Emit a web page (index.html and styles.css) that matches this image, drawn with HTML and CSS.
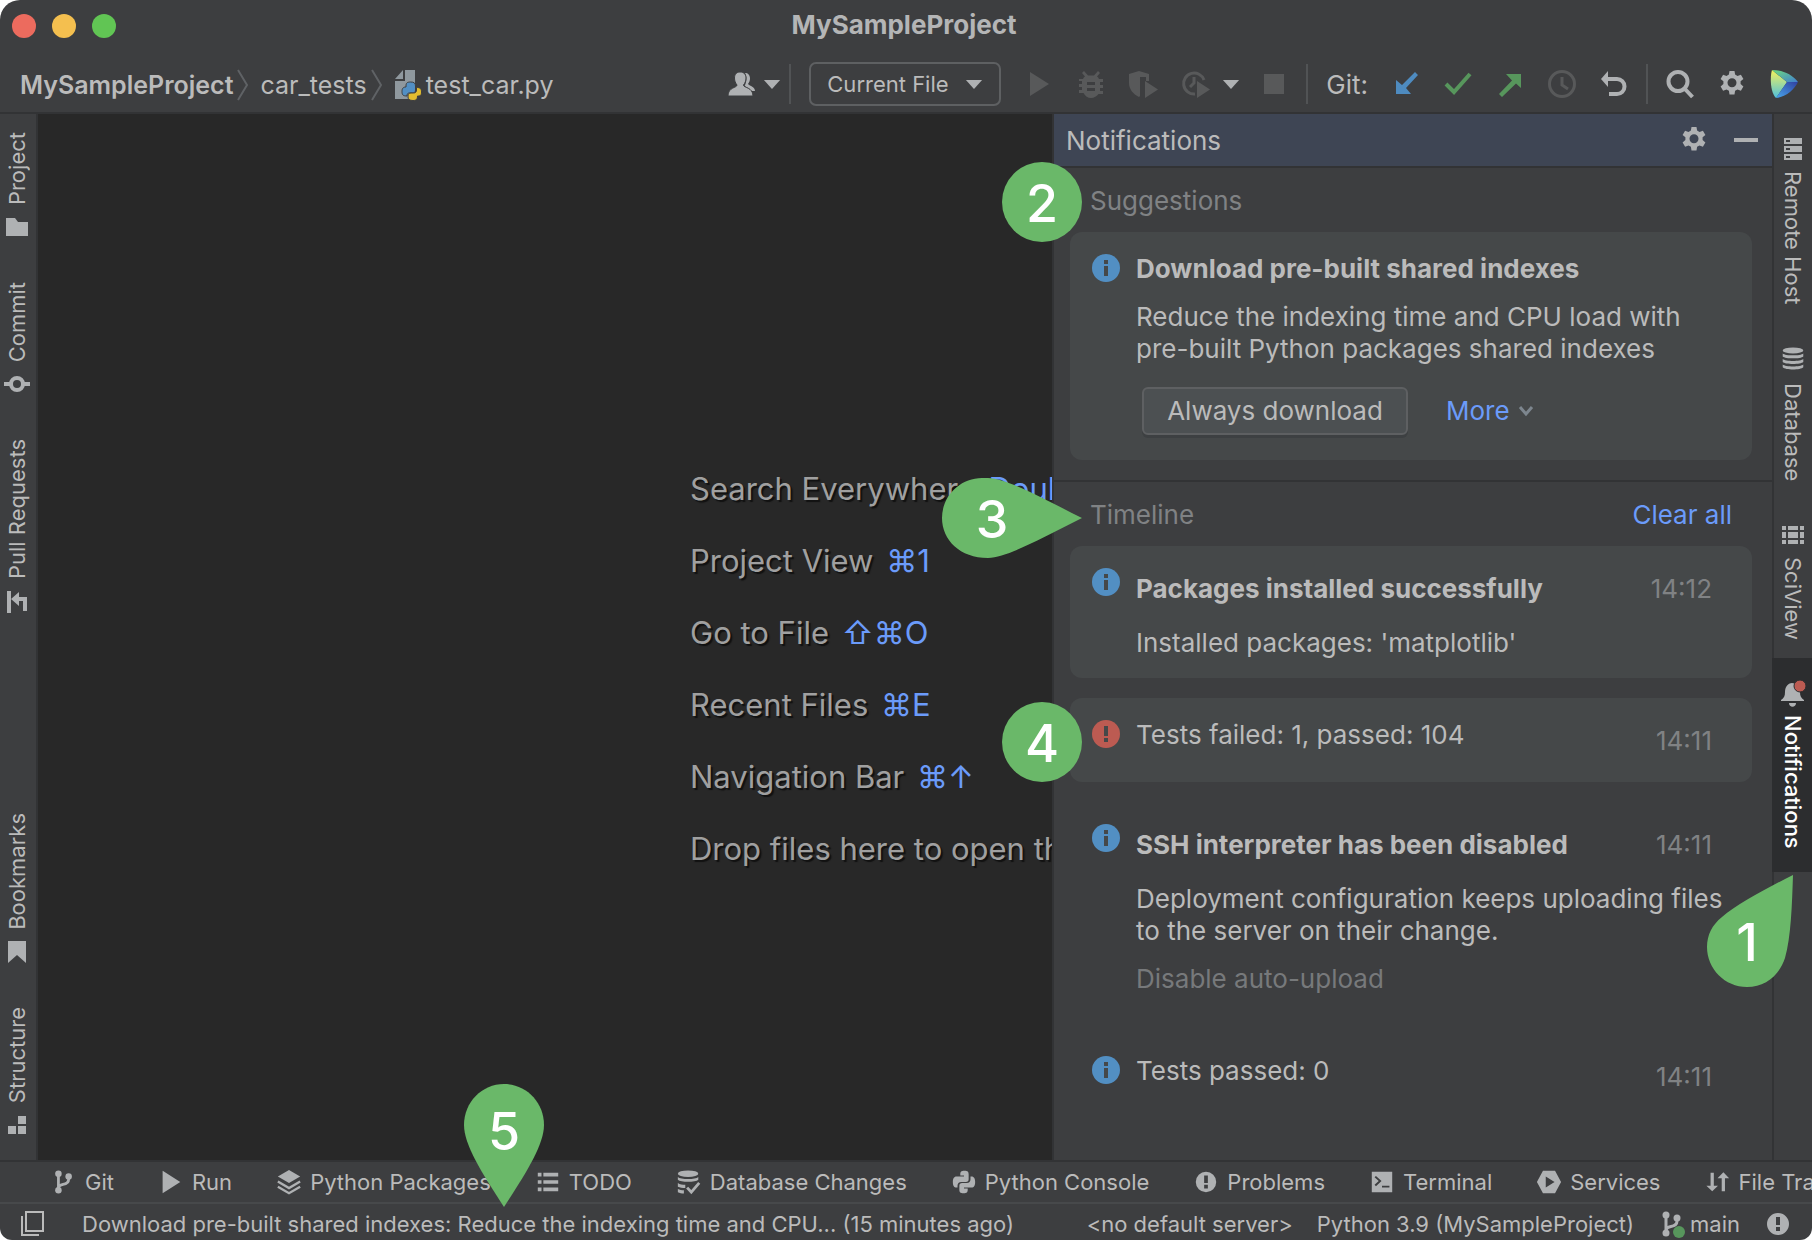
FILE: index.html
```html
<!DOCTYPE html>
<html lang="en">
<head>
    <meta charset="UTF-8">
    <title>MySampleProject</title>
    <link rel="stylesheet" href="styles.css">
</head>
<body>
    <!-- icon sprite -->
    <svg class="sprite" aria-hidden="true">
        <symbol id="i-gear" viewBox="0 0 28 28"><path fill-rule="evenodd" d="M11.5 1h5l.6 3.6 2.4 1.4 3.4-1.3 2.5 4.3-2.8 2.3v2.8l2.8 2.3-2.5 4.3-3.4-1.3-2.4 1.4-.6 3.6h-5l-.6-3.6-2.4-1.4-3.4 1.3-2.5-4.3 2.8-2.3V11.300L2.600 9l2.500-4.300L8.500 6l2.400-1.400zM14 8.200a4.500 4.500 0 1 0 0 9.000a4.500 4.500 0 0 0 0-9z"/></symbol>
        <symbol id="i-info" viewBox="0 0 28 28"><circle cx="14" cy="14" r="14" fill="#528fc3"/><path fill="#454849" d="M12 6h4v4h-4zM12 12h4v10h-4z"/></symbol>
        <symbol id="i-error" viewBox="0 0 28 28"><circle cx="14" cy="14" r="14" fill="#bc5b52"/><path fill="#454849" d="M12 6h4v10h-4zM12 18h4v4h-4z"/></symbol>
        <symbol id="i-warn" viewBox="0 0 28 28"><path fill-rule="evenodd" d="M14 3a11 11 0 1 0 0 22a11 11 0 0 0 0-22zM12 7h4v8h-4zM12 17h4v4h-4z"/></symbol>
        <symbol id="i-branch" viewBox="0 0 28 28"><circle cx="8" cy="5" r="3.500"/><circle cx="8" cy="23" r="3.500"/><circle cx="19" cy="8" r="3.500"/><path fill="none" stroke="currentColor" stroke-width="3" d="M8 5v18M19 8v3c0 4-3 5-6 5.500S8 18 8 21"/></symbol>
        <symbol id="i-play" viewBox="0 0 28 28"><path d="M5 2l19 12L5 26z"/></symbol>
        <symbol id="i-tri" viewBox="0 0 20 12"><path d="M1 1h18l-9 10z"/></symbol>
        <symbol id="i-crumb" viewBox="0 0 12 32"><path fill="none" stroke="#5f6265" stroke-width="2" d="M1 1l9 15-9 15"/></symbol>
        <symbol id="i-db" viewBox="0 0 28 28"><ellipse cx="14" cy="4" rx="12" ry="3.500"/><path d="M2 7.500c3 3 21 3 24 0v3.500c-3 3-21 3-24 0zM2 14c3 3 21 3 24 0v3.500c-3 3-21 3-24 0zM2 20.500c3 3 21 3 24 0v3c-3 3.500-21 3.500-24 0z"/></symbol>
        <symbol id="i-dbcheck" viewBox="0 0 28 28"><ellipse cx="13" cy="5" rx="11" ry="3.500"/><path d="M2 8.500c3 3 19 3 22 0v3c-3 3-19 3-22 0zM2 15c2 1.500 5 2 8 2v3.500c-3 0-6-.5-8-1.500zM2 21.500c2 1 4 1.500 6.500 1.500v3.500C6 26.500 4 26 2 25z"/><path fill="none" stroke="currentColor" stroke-width="3" d="M12 20l4.500 5L25 15"/></symbol>
        <symbol id="i-layers" viewBox="0 0 28 28"><path d="M14 1l12 7-12 7L2 8z"/><path fill="none" stroke="currentColor" stroke-width="2.500" d="M2 13.500l12 7 12-7M2 19l12 7 12-7"/></symbol>
        <symbol id="i-list" viewBox="0 0 28 28"><path d="M3 4h4v4H3zM9 4h16v4H9zM3 12h4v4H3zM9 12h16v4H9zM3 20h4v4H3zM9 20h16v4H9z"/></symbol>
        <symbol id="i-python" viewBox="0 0 28 28"><path d="M10 6c0-3 1-4 4.500-4S19 3 19 6v5c0 2-1 3-3 3h-5c-2.500 0-4 1.500-4 4v2H6c-3 0-4-2.500-4-6s1-6 4-6h8V7h-4z"/><path d="M18 22c0 3-1 4-4.500 4S9 25 9 22v-4c0-2 1-3 3-3h5c2.500 0 4-1.500 4-4V8h1c3 0 4 2.500 4 6s-1 6-4 6h-8v1h4z"/></symbol>
        <symbol id="i-terminal" viewBox="0 0 28 28"><path fill-rule="evenodd" d="M3 3h22v22H3zM6 9l4.500 4L6 17l1.500 1.500 6-5.500-6-5.500zM14 18v2h8v-2z"/></symbol>
        <symbol id="i-services" viewBox="0 0 28 28"><path fill-rule="evenodd" d="M7.500 2h13L27 14l-6.500 12h-13L1 14zM10.500 8v12l9.500-6z"/></symbol>
        <symbol id="i-updown" viewBox="0 0 28 28"><path d="M6 4h3.500v14H14l-6.200 6L1.500 18H6zM18 24h3.500V10H26l-6.200-6.500L13.500 10H18z"/></symbol>
        <symbol id="i-py-file" viewBox="0 0 28 32"><path fill="#8f989e" d="M9 1v9H1zM11 1h10v29H1V12h10z"/><path stroke="#3d3e40" stroke-width="1" fill="#528fc3" d="M12 17c0-3 1-4 4.500-4s5 1 5 4v4c0 2-1 3-3 3h-3c-2 0-2.500 1-2.500 3-4 0-5-1-5-4.500S9.500 18 12 18z"/><path stroke="#3d3e40" stroke-width="1" fill="#e3bd2f" d="M23.500 27c0 3-1 4.500-4.500 4.500s-5-1.500-5-3.500v-1c0-2 1-3 3-3h2.500c2 0 3-1 3-3v-2.500c3.500 0 5 1 5 4.500s-1 4-4 4z"/></symbol>
    </svg>

    <div class="window">
        <header class="titlebar">
            <div class="lights">
                <span class="light red"></span>
                <span class="light yellow"></span>
                <span class="light green"></span>
            </div>
            <h1>MySampleProject</h1>
        </header>

        <div class="toolbar">
            <nav class="crumbs">
                <a href="#" class="crumb-root">MySampleProject</a>
                <svg class="crumb-sep"><use href="#i-crumb"/></svg>
                <a href="#">car_tests</a>
                <svg class="crumb-sep"><use href="#i-crumb"/></svg>
                <svg class="py-file"><use href="#i-py-file"/></svg>
                <a href="#">test_car.py</a>
            </nav>
            <div class="tools">
                <button class="tool user" aria-label="Code with me">
                    <svg class="icon" viewBox="0 0 28 28"><path d="M17 3c3 0 5 2 5 5.500 0 2-.8 4-2 5.500 2 2 7 3 7 7h-5c-1-3-4-4-5.500-5C19 12 19 6 17 3z"/><path stroke="#3d3e40" stroke-width="1" d="M12 2c4 0 6 2.500 6 6 0 3-1 5-2.500 7 0 3 9.500 2 9.500 11H0c0-9 9-8 9-11C7.500 13 6.500 11 6.500 8c0-3.500 2-6 5.500-6z"/></svg>
                    <svg class="tri"><use href="#i-tri"/></svg>
                </button>
                <span class="divider"></span>
                <label class="combo">
                    <select aria-label="Run configuration"><option>Current File</option></select>
                    <svg class="tri"><use href="#i-tri"/></svg>
                </label>
                <button class="tool off" aria-label="Run"><svg class="icon"><use href="#i-play"/></svg></button>
                <button class="tool off" aria-label="Debug">
                    <svg class="icon" viewBox="0 0 28 28"><path fill-rule="evenodd" d="M7 1l4 4.500h6L21 1l2 2-3 3.500c1 .5 1.500 1.500 2 2.500h4v3h-3v3h3v3h-3v3h3v3h-4.500C20 26 17 28 14 28s-6-2-7.500-5H2v-3h3v-3H2v-3h3v-3H2V9h4c.500-1 1-2 2-2.500L5 3zM10 12v3h8v-3zM10 18v3h8v-3z"/></svg>
                </button>
                <button class="tool off" aria-label="Run with coverage">
                    <svg class="icon" viewBox="0 0 28 28"><path d="M0 4l10-3 10 3v7h-3V7h-6v19l-1 1C4 24 0 19 0 13z"/><path d="M16 11l13 8.500L16 28z"/></svg>
                </button>
                <button class="tool off profile" aria-label="Profile">
                    <svg class="icon" viewBox="0 0 28 28"><path fill="none" stroke="currentColor" stroke-width="3" d="M23 10A10.500 10.500 0 1 0 14 24M13 7v6l-4 4"/><path d="M16 11l13 8.500L16 28z"/></svg>
                    <svg class="tri"><use href="#i-tri"/></svg>
                </button>
                <button class="tool off" aria-label="Stop"><svg class="icon" viewBox="0 0 28 28"><path d="M4 4h20v20H4z"/></svg></button>
                <span class="divider"></span>
                <span class="git-label">Git:</span>
                <button class="tool blue" aria-label="Update project"><svg class="icon" viewBox="0 0 28 28"><path d="M23 2l3 3L14 18l5 6H4V10l6 5z"/></svg></button>
                <button class="tool leaf" aria-label="Commit"><svg class="icon" viewBox="0 0 28 28"><path fill="none" stroke="currentColor" stroke-width="4" d="M2 14l8 8L26 4"/></svg></button>
                <button class="tool leaf" aria-label="Push"><svg class="icon" viewBox="0 0 28 28"><path d="M10 4h15v14l-5-4.500L6 27l-3-3 13-13.500z"/></svg></button>
                <button class="tool off" aria-label="History"><svg class="icon" viewBox="0 0 28 28"><path fill="none" stroke="currentColor" stroke-width="3" d="M14 1.500a12.500 12.500 0 1 0 0 25a12.500 12.500 0 0 0 0-25zM14 7v8l6 4"/></svg></button>
                <button class="tool" aria-label="Rollback"><svg class="icon" viewBox="0 0 28 28"><path d="M8 1v6h9a9.500 9.500 0 0 1 0 19H9v-4h8a5.500 5.500 0 0 0 0-11H8v6L1 9z"/></svg></button>
                <span class="divider"></span>
                <button class="tool" aria-label="Search"><svg class="icon" viewBox="0 0 28 28"><path fill="none" stroke="currentColor" stroke-width="4" d="M12 2a9.500 9.500 0 1 0 0 19a9.500 9.500 0 0 0 0-19zM18 18l8.500 9"/></svg></button>
                <button class="tool" aria-label="Settings"><svg class="icon"><use href="#i-gear"/></svg></button>
                <button class="tool" aria-label="Toolbox">
                    <svg class="icon" viewBox="0 0 28 28">
                        <defs>
                            <linearGradient id="g1" x1="0" y1="0" x2="0" y2="1"><stop offset="0" stop-color="#f4f35c"/><stop offset="1" stop-color="#4fc0dc"/></linearGradient>
                            <linearGradient id="g2" x1="0" y1="0" x2="1" y2="1"><stop offset="0" stop-color="#6fdc7c"/><stop offset="1" stop-color="#3f7fd0"/></linearGradient>
                            <linearGradient id="g3" x1="0" y1="1" x2="1" y2="0"><stop offset="0" stop-color="#49a6ec"/><stop offset="1" stop-color="#2f3fa0"/></linearGradient>
                        </defs>
                        <path fill="url(#g1)" d="M2 0c-2 6-2 22 4 28l11-16z"/>
                        <path fill="url(#g2)" d="M2 0c10 0 20 4 26 12H17z"/>
                        <path fill="url(#g3)" d="M17 12h11c-4 8-12 15-22 16z"/>
                    </svg>
                </button>
            </div>
        </div>

        <div class="workspace">
            <aside class="stripe stripe-left">
                <div class="stripe-group">
                    <button class="stripe-btn"><span>Project</span><svg viewBox="0 0 22 22"><path d="M0 2h9l3 4h10v14H0z"/></svg></button>
                    <button class="stripe-btn"><span>Commit</span><svg class="wide" viewBox="0 0 26 22"><path fill="none" stroke="currentColor" stroke-width="4" d="M13 5a6 6 0 1 0 0 12a6 6 0 0 0 0-12zM0 11h7M19 11h7"/></svg></button>
                    <button class="stripe-btn"><span>Pull Requests</span><svg viewBox="0 0 22 22"><path d="M1 0h4v22H1zM5 8l8-7v5h8v14h-4V10h-4v5z"/></svg></button>
                </div>
                <div class="stripe-group">
                    <button class="stripe-btn"><span>Bookmarks</span><svg viewBox="0 0 22 22"><path d="M2 0h18v22l-9-8-9 8z"/></svg></button>
                    <button class="stripe-btn"><span>Structure</span><svg viewBox="0 0 22 22"><path d="M12 2h8v8h-8zM2 12h8v8H2zM12 12h8v8h-8z"/></svg></button>
                </div>
            </aside>

            <main class="editor">
                <ul class="hints">
                    <li>Search Everywhere <kbd>Double ⇧</kbd></li>
                    <li>Project View <kbd>⌘1</kbd></li>
                    <li>Go to File <kbd>⇧⌘O</kbd></li>
                    <li>Recent Files <kbd>⌘E</kbd></li>
                    <li>Navigation Bar <kbd>⌘↑</kbd></li>
                    <li>Drop files here to open them</li>
                </ul>
            </main>

            <section class="panel">
                <div class="panel-header">
                    <h2>Notifications</h2>
                    <button class="tool" aria-label="Options"><svg class="icon"><use href="#i-gear"/></svg></button>
                    <button class="tool" aria-label="Hide"><svg class="icon" viewBox="0 0 28 28"><path d="M2 12h24v4H2z"/></svg></button>
                </div>

                <div class="suggestions">
                    <div class="section-head">
                        <h3>Suggestions</h3>
                        <div class="pin pin-round pin-2">2</div>
                    </div>
                    <article class="card">
                        <svg class="status"><use href="#i-info"/></svg>
                        <div class="card-body">
                            <h4>Download pre-built shared indexes</h4>
                            <p>Reduce the indexing time and CPU load with<br>pre-built Python packages shared indexes</p>
                            <div class="actions">
                                <button class="btn">Always download</button>
                                <button class="link-btn">More <svg viewBox="0 0 16 12"><path fill="none" stroke="#7d868e" stroke-width="3" d="M2 2l6 7 6-7"/></svg></button>
                            </div>
                        </div>
                    </article>
                </div>

                <div class="timeline">
                    <div class="section-head">
                        <h3>Timeline</h3>
                        <a href="#" class="clear">Clear all</a>
                        <div class="pin pin-3">
                            <svg viewBox="0 0 140 80"><path d="M40 0C18 0 0 18 0 40s18 40 46 40C66 79 96 62 140 40 96 18 66 1 46 0z"/></svg>
                            <span>3</span>
                        </div>
                    </div>
                    <article class="card timed">
                        <svg class="status"><use href="#i-info"/></svg>
                        <div class="card-body">
                            <h4>Packages installed successfully</h4>
                            <p>Installed packages: 'matplotlib'</p>
                        </div>
                        <time>14:12</time>
                    </article>
                    <article class="card short">
                        <svg class="status"><use href="#i-error"/></svg>
                        <div class="card-body"><p>Tests failed: 1, passed: 104</p></div>
                        <time>14:11</time>
                        <div class="pin pin-round pin-4">4</div>
                    </article>
                    <article class="card timed read">
                        <svg class="status"><use href="#i-info"/></svg>
                        <div class="card-body">
                            <h4>SSH interpreter has been disabled</h4>
                            <p>Deployment configuration keeps uploading files<br>to the server on their change.</p>
                            <button class="dim-btn" disabled>Disable auto-upload</button>
                        </div>
                        <time>14:11</time>
                    </article>
                    <article class="card short read">
                        <svg class="status"><use href="#i-info"/></svg>
                        <div class="card-body"><p>Tests passed: 0</p></div>
                        <time>14:11</time>
                    </article>
                </div>
            </section>

            <aside class="stripe stripe-right">
                <button class="stripe-btn"><svg viewBox="0 0 22 22"><path fill-rule="evenodd" d="M2 0h18v6H2zM4 2v2h4V2zM2 8h18v6H2zM4 10v2h4v-2zM2 16h18v6H2zM4 18v2h4v-2z"/></svg><span>Remote Host</span></button>
                <button class="stripe-btn"><svg class="tall"><use href="#i-db"/></svg><span>Database</span></button>
                <button class="stripe-btn"><svg viewBox="0 0 22 22"><path d="M0 2h4v4H0zM6 2h10v4H6zM18 2h4v4h-4zM0 8h4v6H0zM6 8h10v6H6zM18 8h4v6h-4zM0 16h4v4H0zM6 16h10v4H6zM18 16h4v4h-4z"/></svg><span>SciView</span></button>
                <button class="stripe-btn active"><svg class="tall" viewBox="0 0 24 26"><path d="M11 2c3 0 8 3 8 9 0 4 1 6 4 8v1H0v-1c3-2 4-4 4-8 0-6 4-9 7-9zM8 22h7c0 5-7 5-7 0z"/><circle cx="19" cy="5" r="6" fill="#bc5b52" stroke="#2c2d2f"/></svg><span>Notifications</span></button>
                <div class="pin pin-1">
                    <svg viewBox="0 0 86 112"><path d="M86 0C60 13 30 29 15 42 5 50 0 60 0 72c0 22 18 40 40 40 18 0 32-11 38-29C84 62 85 30 86 0z"/></svg>
                    <span>1</span>
                </div>
            </aside>
        </div>

        <div class="toolwindows">
            <button class="tw"><svg><use href="#i-branch"/></svg>Git</button>
            <button class="tw"><svg><use href="#i-play"/></svg>Run</button>
            <button class="tw"><svg><use href="#i-layers"/></svg>Python Packages</button>
            <button class="tw"><svg><use href="#i-list"/></svg>TODO</button>
            <button class="tw"><svg><use href="#i-dbcheck"/></svg>Database Changes</button>
            <button class="tw"><svg><use href="#i-python"/></svg>Python Console</button>
            <button class="tw"><svg><use href="#i-warn"/></svg>Problems</button>
            <button class="tw"><svg><use href="#i-terminal"/></svg>Terminal</button>
            <button class="tw"><svg><use href="#i-services"/></svg>Services</button>
            <button class="tw"><svg><use href="#i-updown"/></svg>File Transfer</button>
        </div>

        <footer class="statusbar">
            <svg class="windows" viewBox="0 0 26 26"><path fill="none" stroke="currentColor" stroke-width="2" d="M6 1h17v19H6zM2 5v19h17"/></svg>
            <span class="message">Download pre-built shared indexes: Reduce the indexing time and CPU... (15 minutes ago)</span>
            <span>&lt;no default server&gt;</span>
            <span>Python 3.9 (MySampleProject)</span>
            <span class="branch"><svg viewBox="0 0 28 28"><use href="#i-branch"/><circle cx="21" cy="22" r="6" fill="#57965c"/></svg>main</span>
            <svg class="event"><use href="#i-warn"/></svg>
            <div class="pin pin-5">
                <svg viewBox="0 0 80 123"><path d="M40 0C18 0 0 18 0 41c0 20 18 48 40 82 22-34 40-62 40-82C80 18 62 0 40 0z"/></svg>
                <span>5</span>
            </div>
        </footer>
    </div>
</body>
</html>
```
FILE: styles.css
```css
* {
    box-sizing: border-box;
}

body {
    margin: 0;
    background: #fff;
    color: #bbbbbb;
    font-family: Inter, "Liberation Sans", sans-serif;
    font-size: 26px;
}

h1, h2, h3, h4, p, ul {
    margin: 0;
    padding: 0;
}

a {
    color: inherit;
    text-decoration: none;
}

button, select {
    font: inherit;
    color: inherit;
    background: none;
    border: none;
    padding: 0;
    margin: 0;
}

svg {
    fill: currentColor;
    flex: none;
    display: block;
    overflow: visible;
}

.sprite {
    position: absolute;
    width: 0;
    height: 0;
}

.window {
    display: flex;
    flex-direction: column;
    min-height: 100vh;
    background: #3d3e40;
    border-radius: 20px 20px 12px 12px;
    overflow: hidden;
}

/* title bar */

.titlebar {
    position: relative;
    display: flex;
    align-items: center;
    justify-content: center;
    height: 52px;
    padding: 0 4px 4px 0;
}

.titlebar h1 {
    font-size: 26px;
    font-weight: 700;
    color: #b4b5b6;
}

.lights {
    position: absolute;
    left: 12px;
    top: 14px;
    display: flex;
    gap: 16px;
}

.light {
    width: 24px;
    height: 24px;
    border-radius: 50%;
}

.red { background: #ec6b5e; }
.yellow { background: #f4bf4f; }
.green { background: #61c554; }

/* toolbar */

.toolbar {
    display: flex;
    align-items: center;
    justify-content: space-between;
    height: 62px;
    padding: 4px 14px 0 20px;
    border-bottom: 2px solid #323335;
}

.crumbs {
    display: flex;
    align-items: center;
    font-size: 25px;
    padding-top: 2px;
}

.crumb-root {
    font-weight: 600;
}

.crumb-sep {
    width: 12px;
    height: 32px;
    margin: 0 11px 0 4px;
}

.py-file {
    width: 28px;
    height: 32px;
    margin-right: 4px;
}

.tools {
    display: flex;
    align-items: center;
    gap: 24px;
}

.tool {
    display: flex;
    align-items: center;
    color: #afb1b3;
}

.icon {
    width: 28px;
    height: 28px;
}

.tri {
    width: 18px;
    height: 11px;
    color: #afb1b3;
}

.user {
    gap: 7px;
    margin-right: -10px;
}

.profile {
    gap: 13px;
    margin-right: -4px;
}

.off { color: #58595a; }
.blue { color: #4e8bc0; }
.leaf { color: #57965c; }

.divider {
    width: 2px;
    height: 40px;
    margin: 0 -6px;
    background: #515355;
}

.combo {
    position: relative;
}

.combo select {
    display: block;
    appearance: none;
    width: 192px;
    height: 44px;
    padding: 0 16px;
    border: 2px solid #5e6062;
    border-radius: 7px;
    font-size: 22px;
}

.combo .tri {
    position: absolute;
    right: 18px;
    top: 17px;
    pointer-events: none;
}

/* middle area */

.workspace {
    display: flex;
    flex: 1;
}

.stripe {
    display: flex;
    flex-direction: column;
    flex: none;
    font-size: 22px;
    line-height: 26px;
}

.stripe-left {
    width: 38px;
    justify-content: space-between;
    padding: 18px 2px 24px 0;
    border-right: 2px solid #323335;
}

.stripe-group {
    display: flex;
    flex-direction: column;
    gap: 44px;
}

.stripe-btn {
    display: flex;
    flex-direction: column;
    align-items: center;
    gap: 11px;
}

.stripe-btn span {
    writing-mode: vertical-rl;
}

.stripe-left span {
    transform: rotate(180deg);
}

.stripe-btn svg {
    width: 22px;
    height: 22px;
    color: #afb1b3;
}

.stripe-btn .wide {
    width: 26px;
}

.stripe-right {
    position: relative;
    width: 40px;
    padding-top: 24px;
    border-left: 2px solid #323335;
}

.stripe-right .stripe-btn {
    padding-bottom: 42px;
}

.stripe-right .stripe-btn:nth-child(3) {
    padding-bottom: 18px;
}

.stripe-right .active {
    gap: 8px;
    margin-left: -2px;
    padding: 23px 0 23px 2px;
    background: #2c2d2f;
    color: #fff;
    font-weight: 500;
}

.stripe-btn .tall {
    width: 24px;
    height: 26px;
}

.editor {
    flex: 1;
    min-width: 0;
    overflow: hidden;
    background: #282828;
    padding: 339px 0 0 652px;
}

.hints {
    list-style: none;
    font-size: 31px;
    line-height: 72px;
    color: #a0a0a0;
    white-space: nowrap;
    text-shadow: 2px 2px 1px #111;
}

.hints kbd {
    font-family: inherit;
    color: #6b9bfa;
    margin-left: 4px;
    text-shadow: none;
}

/* notifications */

.panel {
    flex: none;
    width: 720px;
    border-left: 2px solid #323335;
}

.panel-header {
    display: flex;
    align-items: center;
    gap: 24px;
    height: 54px;
    padding: 0 12px;
    background: #3e4554;
    border-bottom: 2px solid #323335;
}

.panel-header h2 {
    flex: 1;
    font-size: 26px;
    font-weight: 400;
}

.suggestions {
    padding: 0 20px 20px 16px;
    border-bottom: 2px solid #323335;
}

.timeline {
    padding: 0 20px 20px 16px;
}

.section-head {
    position: relative;
    display: flex;
    align-items: center;
    justify-content: space-between;
    height: 64px;
    padding: 0 20px;
}

.section-head h3 {
    font-size: 26px;
    font-weight: 400;
    color: #808284;
}

.clear,
.link-btn {
    color: #6b9bfa;
}

.card {
    position: relative;
    display: flex;
    gap: 16px;
    padding: 20px 40px 24px 22px;
    border-radius: 12px;
    background: #454849;
    line-height: 32px;
    margin-bottom: 20px;
}

.suggestions .card {
    margin-bottom: 0;
}

.card.read {
    background: none;
}

.status {
    width: 28px;
    height: 28px;
    margin-top: 2px;
}

/* long lines may run under the time column */
.card-body {
    flex: 1;
    min-width: 0;
    padding-top: 1px;
}

.card h4 {
    font-size: 26px;
    font-weight: 700;
    margin-bottom: 16px;
}

.card p {
    white-space: nowrap;
}

.card time {
    color: #808284;
}

.timed h4 {
    padding-top: 6px;
    margin-bottom: 22px;
}

.timed {
    padding-bottom: 19px;
}

.timed time,
.short time {
    padding-top: 7px;
}

.short {
    height: 84px;
}

.actions {
    display: flex;
    align-items: center;
    gap: 38px;
    margin: 22px 0 1px 6px;
}

.btn {
    height: 48px;
    width: 266px;
    border: 2px solid #5e6062;
    border-radius: 6px;
    background: #4c5052;
    box-shadow: 0 3px 0 #3d4042;
}

.link-btn {
    display: flex;
    align-items: center;
    gap: 8px;
}

.link-btn svg {
    width: 16px;
    height: 12px;
}

.dim-btn {
    display: block;
    margin-top: 16px;
    color: #77797b;
}

/* bottom bars */

.toolwindows {
    display: flex;
    align-items: center;
    gap: 44px;
    height: 42px;
    padding-left: 51px;
    border-top: 2px solid #323335;
    font-size: 22px;
    white-space: nowrap;
    overflow: hidden;
}

.tw {
    display: flex;
    align-items: center;
    flex: none;
    gap: 8px;
}

.tw svg {
    width: 26px;
    height: 26px;
    color: #afb1b3;
}

.statusbar {
    position: relative;
    display: flex;
    align-items: center;
    gap: 24px;
    height: 38px;
    padding: 3px 20px 0;
    border-top: 2px solid #47494b;
    font-size: 22px;
    white-space: nowrap;
}

.windows {
    width: 26px;
    height: 26px;
    margin-right: 12px;
}

.message {
    flex: 1;
}

.branch {
    display: flex;
    align-items: center;
    gap: 4px;
}

.branch svg,
.event {
    width: 28px;
    height: 28px;
    color: #afb1b3;
}

/* numbered pins */

.pin {
    position: absolute;
    z-index: 2;
    color: #fff;
    font-size: 52px;
    font-weight: 500;
    line-height: 84px;
    text-align: center;
}

.pin svg {
    width: 100%;
    height: 100%;
    fill: #6ab869;
}

.pin span {
    position: absolute;
    width: 80px;
}

.pin-round {
    width: 80px;
    height: 80px;
    border-radius: 50%;
    background: #6ab869;
}

.pin-1 {
    right: 19px;
    top: 761px;
    width: 86px;
    height: 112px;
}

.pin-1 span {
    left: 0;
    bottom: 2px;
}

.pin-2 {
    left: -68px;
    top: -6px;
}

.pin-3 {
    left: -128px;
    top: -4px;
    width: 140px;
    height: 80px;
}

.pin-3 span {
    left: 10px;
    top: 0;
}

.pin-4 {
    left: -68px;
    top: 4px;
}

.pin-5 {
    left: 464px;
    bottom: 33px;
    width: 80px;
    height: 123px;
}

.pin-5 span {
    left: 0;
    top: 6px;
}
```
